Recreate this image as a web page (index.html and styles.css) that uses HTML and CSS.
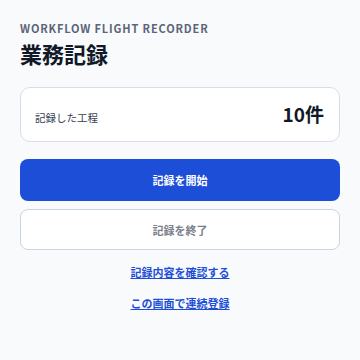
FILE: index.html
```html
<!DOCTYPE html>
<html lang="ja">
<head>
<meta charset="utf-8">
<link rel="stylesheet" href="styles.css">
</head>
<body>
<main class="app">
  <header class="head">
    <div class="eyebrow">WORKFLOW FLIGHT RECORDER</div>
    <h1 class="title">業務記録</h1>
  </header>
  <section class="card">
    <span class="card-label">記録した工程</span>
    <span class="card-value">10件</span>
  </section>
  <button class="btn btn-primary">記録を開始</button>
  <button class="btn btn-secondary">記録を終了</button>
  <nav class="links">
    <a class="link" href="#">記録内容を確認する</a>
    <a class="link" href="#">この画面で連続登録</a>
  </nav>
</main>
</body>
</html>
```
FILE: styles.css
```css
html, body {
  margin: 0;
  padding: 0;
  background: #f8fafc;
}
body {
  font-family: "Noto Sans CJK JP", "Noto Sans", sans-serif;
  color: #0f172a;
  width: 360px;
  height: 360px;
  overflow: hidden;
}
.app {
  padding: 20px 20px 0;
  display: flex;
  flex-direction: column;
}
.head {
  display: flex;
  flex-direction: column;
}
.eyebrow {
  font-size: 11px;
  font-weight: 700;
  letter-spacing: 0.85px;
  color: #5b6579;
  line-height: 16px;
}
.title {
  margin: 2px 0 0;
  font-size: 22px;
  font-weight: 700;
  line-height: 30px;
  color: #111827;
}
.card {
  margin-top: 19px;
  height: 55px;
  box-sizing: border-box;
  border: 1px solid #d8dee9;
  border-radius: 10px;
  background: #ffffff;
  display: flex;
  justify-content: space-between;
  align-items: baseline;
  padding: 14px 15px 0 14px;
}
.card-label {
  font-size: 10.5px;
  color: #374151;
  line-height: 20px;
}
.card-value {
  font-size: 19px;
  font-weight: 700;
  color: #111827;
  line-height: 24px;
}
.btn {
  display: block;
  width: 100%;
  border-radius: 8px;
  font-family: inherit;
  font-size: 11px;
  font-weight: 700;
  box-sizing: border-box;
  padding: 0;
}
.btn-primary {
  margin-top: 17px;
  height: 42px;
  border: none;
  background: #1d4ed8;
  color: #ffffff;
}
.btn-secondary {
  margin-top: 8px;
  height: 41px;
  border: 1px solid #cbd5e1;
  background: #ffffff;
  color: #7a808b;
}
.links {
  margin-top: 14px;
  display: flex;
  flex-direction: column;
  align-items: center;
  gap: 14px;
}
.link {
  font-size: 11px;
  font-weight: 700;
  color: #1d4ed8;
  line-height: 17px;
  text-decoration: underline;
}
```
